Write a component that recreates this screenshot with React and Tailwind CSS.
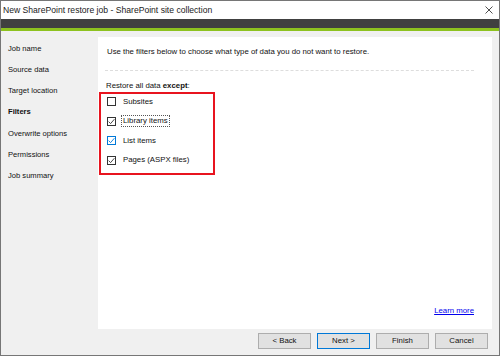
import React from 'react';

const navItems = [
  'Job name',
  'Source data',
  'Target location',
  'Filters',
  'Overwrite options',
  'Permissions',
  'Job summary',
];

const filters = [
  { label: 'Subsites', checked: false },
  { label: 'Library items', checked: true, focus: true },
  { label: 'List items', checked: true, hover: true },
  { label: 'Pages (ASPX files)', checked: true },
];

const CheckBox = ({ checked, hover }) => (
  <span
    className={
      'flex h-[9px] w-[9px] shrink-0 items-center justify-center border bg-white ' +
      (hover ? 'border-[#0078d7]' : 'border-[#333333]')
    }
  >
    {checked && (
      <svg width="7" height="7" viewBox="0 0 7 7">
        <polyline
          points="0.6,3.6 2.6,5.6 6.4,1.2"
          fill="none"
          stroke={hover ? '#0078d7' : '#333333'}
          strokeWidth="0.9"
        />
      </svg>
    )}
  </span>
);

const WizardButton = ({ children, primary }) => (
  <button
    className={
      'h-[16px] w-[53px] border bg-[#e1e1e1] text-[7.8px] text-[#111] ' +
      (primary ? 'border-[#0078d7]' : 'border-[#adadad]')
    }
  >
    {children}
  </button>
);

export default function App() {
  return (
    <div
      className="flex h-[356px] w-[500px] flex-col border border-[#767676] bg-[#f0f0f0] text-[#111]"
      style={{ fontFamily: '"Liberation Sans", Arial, sans-serif' }}
    >
      {/* title bar */}
      <div className="flex h-[18px] items-center justify-between bg-white pl-[2px] pr-[6px]">
        <span className="text-[8.6px] text-[#1a1a1a]">
          New SharePoint restore job - SharePoint site collection
        </span>
        <svg width="8" height="8" viewBox="0 0 8 8">
          <path d="M0.5 0.5 L7.5 7.5 M7.5 0.5 L0.5 7.5" stroke="#222" strokeWidth="0.8" />
        </svg>
      </div>
      <div className="h-[9px] bg-[#404040]" />
      <div className="h-[3px] bg-[#8dc21f]" />

      <div className="flex flex-1 pr-[7px] pt-[6px]">
        {/* sidebar */}
        <div className="w-[97px] shrink-0 pl-[7px] pt-[1px]">
          {navItems.map((item) => (
            <div
              key={item}
              className={
                'flex h-[21.2px] items-center text-[7.6px] ' +
                (item === 'Filters' ? 'font-bold' : '')
              }
            >
              {item}
            </div>
          ))}
        </div>

        {/* content panel */}
        <div className="flex flex-1 flex-col bg-white pb-[12px] pr-[18px]">
          <div className="flex h-[21px] items-end pl-[9px] text-[7.8px]">
            Use the filters below to choose what type of data you do not want to restore.
          </div>
          <div className="ml-[7px] mt-[12px] border-t border-dashed border-[#dddddd]" />
          <div className="mt-[9px] pl-[8px] text-[7.8px]">
            Restore all data <span className="font-bold">except</span>:
          </div>
          <div className="ml-[1px] mt-0 w-[116px] border-2 border-[#e8141f] pb-[5px] pl-[6px]">
            <div className="flex flex-col gap-[3.5px]">
              {filters.map((f) => (
                <div key={f.label} className="flex h-[16px] items-center gap-[5px] text-[7.8px]">
                  <CheckBox checked={f.checked} hover={f.hover} />
                  <span
                    className={
                      'px-[1px] leading-[10px] ' +
                      (f.focus ? 'border border-dotted border-[#555]' : 'border border-transparent')
                    }
                  >
                    {f.label}
                  </span>
                </div>
              ))}
            </div>
          </div>
          <div className="mt-auto flex justify-end">
            <span className="text-[7.8px] text-[#0000ee] underline">Learn more</span>
          </div>
        </div>
      </div>

      {/* footer */}
      <div className="flex h-[26px] items-start justify-end gap-[6px] pr-[11px] pt-[4px]">
        <WizardButton>&lt; Back</WizardButton>
        <WizardButton primary>Next &gt;</WizardButton>
        <WizardButton>Finish</WizardButton>
        <WizardButton>Cancel</WizardButton>
      </div>
    </div>
  );
}
